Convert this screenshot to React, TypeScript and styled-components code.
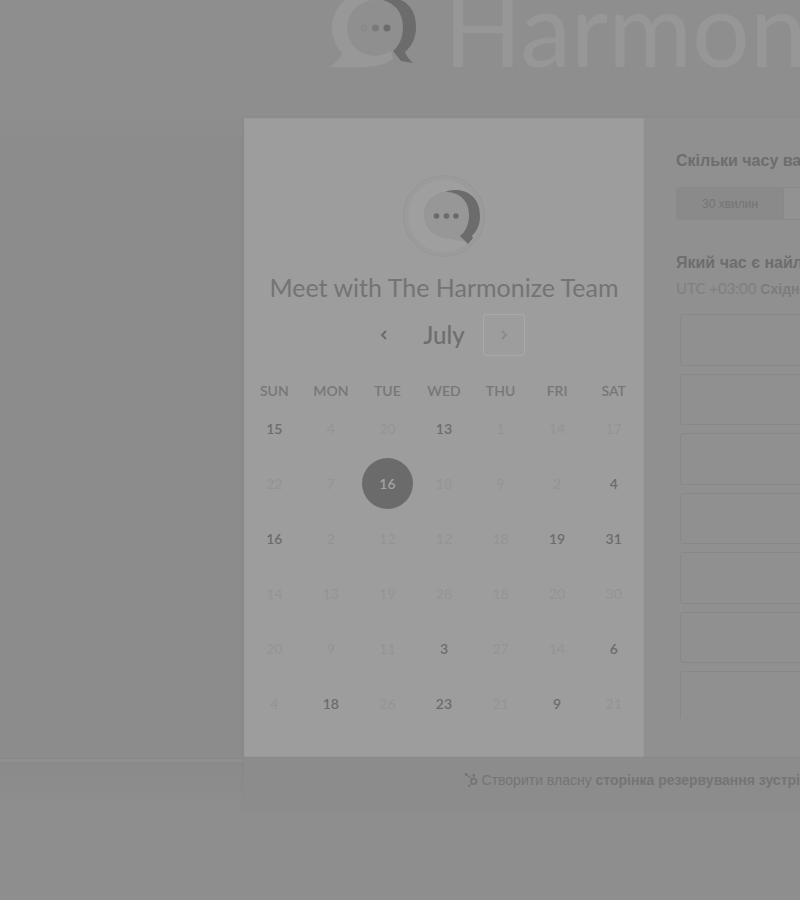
import React from "react";
import styled, { createGlobalStyle } from "styled-components";
import { FaHubspot } from "react-icons/fa";

const GlobalStyle = createGlobalStyle`
  * { box-sizing: border-box; }
  body {
    margin: 0;
    background: #8e8e8e;
    color: #6c6c6c;
    font-family: "Liberation Sans", Arial, sans-serif;
  }
  button { font: inherit; color: inherit; padding: 0; cursor: pointer; }
`;

const Page = styled.div`
  min-height: 100vh;
  overflow: hidden;
`;

const Header = styled.header`
  display: flex;
  align-items: flex-end;
  height: 118px;
  padding: 0 0 48px 328px;
  overflow: hidden;
`;

const BrandMark = styled.svg`
  flex: none;
  width: 90px;
  height: 80px;
`;

const BrandName = styled.span`
  margin: 0 0 -18px 26px;
  font: 400 102px/120px Lato, sans-serif;
  color: #979797;
`;

const Main = styled.main`
  display: grid;
  grid-template-columns: 244px minmax(800px, 1fr);
`;

const Band = styled.div`
  display: grid;
  grid-template-rows: minmax(0, 1fr) 48px;
`;

const BandTop = styled.div`
  background: linear-gradient(#8e8e8e, #8c8c8c 24px);
  border-bottom: 1px solid #888888;
`;

const BandBottom = styled.div`
  background: linear-gradient(#8a8a8a, #8e8e8e);
  border-top: 3px solid #909090;
`;

const Card = styled.section`
  box-shadow: 0 1px 4px #888888;
`;

const Columns = styled.div`
  display: grid;
  grid-template-columns: 400px minmax(400px, 1fr);
`;

const CalendarPanel = styled.section`
  display: flex;
  flex-direction: column;
  align-items: center;
  padding: 55px 0 25px;
  background: #9d9d9d;
  border: 1px solid #999999;
  font-family: Lato, sans-serif;
`;

const Avatar = styled.svg`
  width: 84px;
  height: 84px;
`;

const Title = styled.h1`
  margin: 12px 0 10px;
  font-size: 25px;
  line-height: 34px;
  font-weight: 400;
  white-space: nowrap;
  color: #747474;
`;

const MonthBar = styled.div`
  display: grid;
  grid-template-columns: 42px 78px 42px;
  align-items: center;
  text-align: center;
`;

const Month = styled.h2`
  margin: 0;
  font-size: 24px;
  line-height: 30px;
  font-weight: 500;
  color: #6e6e6e;
`;

const MonthButton = styled.button<{ $framed?: boolean }>`
  display: grid;
  place-items: center;
  height: 42px;
  background: none;
  border: 1px solid ${(p) => (p.$framed ? "#a9a9a9" : "transparent")};
  border-radius: 3px;
  color: ${(p) => (p.$framed ? "#8c8c8c" : "#6c6c6c")};
`;

const Calendar = styled.table`
  width: 396px;
  margin-top: 25px;
  table-layout: fixed;
  border-collapse: collapse;
`;

const Weekday = styled.th`
  height: 20px;
  padding: 0;
  font-size: 14px;
  line-height: 20px;
  font-weight: 600;
  color: #777777;
`;

const DayCell = styled.td`
  height: 55px;
  padding: 0;
`;

const Day = styled.button<{ $kind: "off" | "open" | "picked" }>`
  display: block;
  width: 51px;
  height: 51px;
  margin: 0 auto;
  border: 0;
  border-radius: 50%;
  font-size: 14px;
  font-weight: ${(p) => (p.$kind === "off" ? 400 : 600)};
  background: ${(p) => (p.$kind === "picked" ? "#6b6b6b" : "none")};
  color: ${(p) =>
    p.$kind === "picked" ? "#a2a2a2" : p.$kind === "open" ? "#6c6c6c" : "#949494"};
`;

const TimePanel = styled.section`
  padding: 33px 32px 37px;
  background: #909090;
`;

const Question = styled.h3`
  margin: 0;
  font-size: 16px;
  line-height: 20px;
  font-weight: 700;
  white-space: nowrap;
  color: #6d6d6d;
`;

const Durations = styled.div`
  display: flex;
  height: 33px;
  margin: 16px 0 33px;
  border: 1px solid #8a8a8a;
  border-radius: 3px;
`;

const Duration = styled.button<{ $active?: boolean }>`
  flex: ${(p) => (p.$active ? "0 0 107px" : "1")};
  border: 0;
  border-right: 1px solid #888888;
  background: ${(p) => (p.$active ? "#8a8a8a" : "#929292")};
  color: #747474;
  font-size: 12px;
`;

const Zone = styled.p`
  margin: 5px 0 15px;
  font: 15px/20px Lato, sans-serif;
  white-space: nowrap;
  color: #7f7f7f;
`;

const ZoneName = styled.span`
  font: 700 14px/20px "Liberation Sans", Arial, sans-serif;
  color: #7c7c7c;
`;

const SlotWindow = styled.div`
  height: 404px;
  margin: 0 4px;
  overflow: hidden;
`;

const Slots = styled.div`
  display: grid;
  grid-template-rows: repeat(7, 1fr);
  gap: 8px;
  height: 409px;
`;

const Slot = styled.button`
  background: none;
  border: 1px solid #888888;
  border-radius: 3px;
  font-size: 14px;
`;

const Footer = styled.footer`
  display: flex;
  align-items: center;
  justify-content: center;
  gap: 4px;
  height: 50px;
  padding-bottom: 5px;
  border-top: 1px solid #888888;
  background: #8c8c8c;
  font-size: 14px;
  color: #747474;
`;

const FooterLink = styled.a`
  color: inherit;
  text-decoration: none;
  white-space: nowrap;
`;

const weekdays = ["SUN", "MON", "TUE", "WED", "THU", "FRI", "SAT"];

const weeks = [
  ["15+", "4", "20", "13+", "1", "14", "17"],
  ["22", "7", "16*", "18", "9", "2", "4+"],
  ["16+", "2", "12", "12", "18", "19+", "31+"],
  ["14", "13", "19", "28", "18", "20", "30"],
  ["20", "9", "11", "3+", "27", "14", "6+"],
  ["4", "18+", "26", "23+", "21", "9+", "21"],
];

const times = ["10:00", "10:30", "11:00", "11:30", "12:00", "12:30", "13:00"];

const kindOf = (day: string) =>
  day.endsWith("*") ? "picked" : day.endsWith("+") ? "open" : "off";

function Chevron({ right }: { right?: boolean }) {
  return (
    <svg width="8" height="12" viewBox="0 0 8 12" fill="none" stroke="currentColor" strokeWidth="2">
      <path d={right ? "M2 2l4 4-4 4" : "M6 2L2 6l4 4"} />
    </svg>
  );
}

export default function App() {
  return (
    <>
      <GlobalStyle />
      <Page>
        <Header>
          <BrandMark viewBox="328 -10 90 80" aria-hidden="true">
            <path
              d="M375-10C350-10 332 6 332 28c0 10 4 18 10 25-2 6-6 10-13 14 20 1 42 1 54-3 5-1 8-4 10-6z"
              fill="#989898"
            />
            <circle cx="375" cy="28" r="28" fill="#8f8f8f" />
            <path
              d="M375-1C386-5 416-5 416 27c0 11-4 19-11 25 2 5 5 8 8 11l-12-2-8-10c6-5 10-13 10-24 0-18-13-28-28-28z"
              fill="#6c6c6c"
            />
            <circle cx="364" cy="28" r="3" fill="#8c8c8c" stroke="#868686" />
            <circle cx="375.500" cy="28" r="3.500" fill="#7a7a7a" />
            <circle cx="387" cy="28" r="3.500" fill="#6c6c6c" />
          </BrandMark>
          <BrandName>Harmonize</BrandName>
        </Header>
        <Main>
          <Band>
            <BandTop />
            <BandBottom />
          </Band>
          <Card>
            <Columns>
              <CalendarPanel>
                <Avatar viewBox="402 174 84 84" aria-hidden="true">
                  <circle cx="444" cy="216" r="40.500" fill="#9b9b9b" stroke="#969696" />
                  <circle cx="444" cy="216" r="36" fill="#9f9f9f" />
                  <path
                    d="M447 192c-14 0-23 10-23 23 0 15 12 24 27 24l14 3-3-9c6-4 8-11 8-18 0-14-9-23-23-23z"
                    fill="#979797"
                  />
                  <path
                    d="M445 192c11-5 35-2 35 24 0 9-3 15-8 20l1 2-5 6-8-8c6-5 9-12 9-21 0-15-10-23-24-23z"
                    fill="#6c6c6c"
                  />
                  <circle cx="436.500" cy="216" r="2.800" fill="#6a6a6a" />
                  <circle cx="446.500" cy="216" r="2.800" fill="#6a6a6a" />
                  <circle cx="456" cy="216" r="2.800" fill="#6a6a6a" />
                </Avatar>
                <Title>Meet with The Harmonize Team</Title>
                <MonthBar>
                  <MonthButton aria-label="Previous month"><Chevron /></MonthButton>
                  <Month>July</Month>
                  <MonthButton $framed aria-label="Next month"><Chevron right /></MonthButton>
                </MonthBar>
                <Calendar>
                  <thead>
                    <tr>{weekdays.map((d) => <Weekday key={d} scope="col">{d}</Weekday>)}</tr>
                  </thead>
                  <tbody>
                    {weeks.map((week, w) => (
                      <tr key={w}>
                        {week.map((day, d) => (
                          <DayCell key={d}>
                            <Day $kind={kindOf(day)}>{parseInt(day, 10)}</Day>
                          </DayCell>
                        ))}
                      </tr>
                    ))}
                  </tbody>
                </Calendar>
              </CalendarPanel>
              <TimePanel>
                <Question>Скільки часу вам потрібно?</Question>
                <Durations>
                  <Duration $active>30 хвилин</Duration>
                  <Duration>60 хвилин</Duration>
                </Durations>
                <Question>Який час є найліпшим?</Question>
                <Zone>UTC +03:00 <ZoneName>Східноєвропейський час</ZoneName></Zone>
                <SlotWindow>
                  <Slots>{times.map((t) => <Slot key={t}>{t}</Slot>)}</Slots>
                </SlotWindow>
              </TimePanel>
            </Columns>
            <Footer>
              <FaHubspot size={14} aria-hidden="true" />
              <FooterLink href="#create">
                Створити власну <b>сторінка резервування зустрічей</b>
              </FooterLink>
            </Footer>
          </Card>
        </Main>
      </Page>
    </>
  );
}
